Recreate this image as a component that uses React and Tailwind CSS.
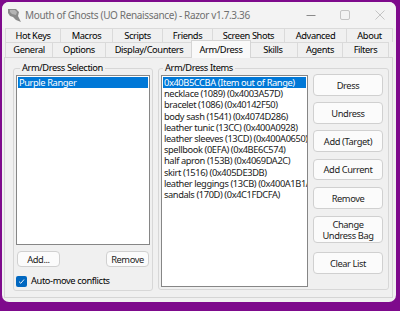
import React from "react";

const ROW1 = [
  ["Hot Keys", 56],
  ["Macros", 52],
  ["Scripts", 50],
  ["Friends", 50],
  ["Screen Shots", 72],
  ["Advanced", 62],
  ["About", 46],
];

const ROW2 = [
  ["General", 48],
  ["Options", 53],
  ["Display/Counters", 87],
  ["Arm/Dress", 60],
  ["Skills", 49],
  ["Agents", 45],
  ["Filters", 46],
];

const ITEMS = [
  "0x40B5CCBA (Item out of Range)",
  "necklace (1089) (0x4003A57D)",
  "bracelet (1086) (0x40142F50)",
  "body sash (1541) (0x4074D286)",
  "leather tunic (13CC) (0x400A0928)",
  "leather sleeves (13CD) (0x400A0650)",
  "spellbook (0EFA) (0x4BE6C574)",
  "half apron (153B) (0x4069DA2C)",
  "skirt (1516) (0x405DE3DB)",
  "leather leggings (13CB) (0x400A1B1A)",
  "sandals (170D) (0x4C1FDCFA)",
];

function Btn({ children, className = "" }) {
  return (
    <button
      type="button"
      className={`flex items-center justify-center whitespace-nowrap rounded-[4px] border border-[#d0d0d0] bg-[#fbfbfb] leading-[11px] text-[#1b1b1b] ${className}`}
    >
      {children}
    </button>
  );
}

function TabRow({ tabs, selected }) {
  return (
    <div className="ml-[3px] flex h-[15px]">
      {tabs.map(([label, w], i) => (
        <div
          key={label}
          style={{ width: w }}
          className={
            label === selected
              ? "relative z-10 -mx-[2px] -mt-[2px] flex h-[18px] items-center justify-center whitespace-nowrap border-x border-t border-[#d5d5d5] bg-[#f9f9f9] px-[2px]"
              : `flex h-[15px] items-center justify-center whitespace-nowrap border-t border-r border-[#dadada] bg-[#f0f0f0] ${i === 0 ? "border-l" : ""}`
          }
        >
          {label}
        </div>
      ))}
    </div>
  );
}

export default function App() {
  return (
    <div className="h-[311px] w-[400px] overflow-hidden bg-[#7e0a8c] pl-[2px] pt-[2px] font-['Noto_Sans',sans-serif] text-[9.3px] tracking-[-0.4px] text-black">
      <div className="flex h-[300px] w-[394px] flex-col overflow-hidden rounded-[7px] bg-[#f0f0f0]">
        {/* title bar */}
        <div className="flex h-[26px] items-center bg-[#f3f3f3] pl-[5px]">
          <svg width="15" height="15" viewBox="0 0 15 15">
            <path d="M1 1 H9 L12 4 L11 8 L14 14 L9 12 L6 9 L3 8 L1 5 Z" fill="#8a8a8a" />
            <path d="M3 2 H8 L10 4 L9 7 L5 6 L3 4 Z" fill="#b4b4b4" />
          </svg>
          <span className="ml-[3px] whitespace-nowrap text-[10px] tracking-[-0.35px] text-[#707070]">
            Mouth of Ghosts (UO Renaissance) - Razor v1.7.3.36
          </span>
          <div className="ml-auto flex items-center">
            <svg width="10" height="10" viewBox="0 0 10 10" className="mr-[24px]">
              <path d="M0.5 5.5 H9.5" stroke="#8a8a8a" strokeWidth="1" />
            </svg>
            <svg width="10" height="10" viewBox="0 0 10 10" className="mr-[25px]">
              <rect x="0.5" y="0.5" width="9" height="9" rx="1.5" fill="none" stroke="#c4c4c4" />
            </svg>
            <svg width="10" height="10" viewBox="0 0 10 10" className="mr-[11px]">
              <path d="M0.5 0.5 L9.5 9.5 M9.5 0.5 L0.5 9.5" stroke="#c4c4c4" strokeWidth="1" />
            </svg>
          </div>
        </div>

        {/* tabs */}
        <div className="ml-[3px] flex h-[14px]">
          {ROW1.map(([label, w], i) => (
            <div
              key={label}
              style={{ width: w }}
              className={`flex h-[14px] items-center justify-center whitespace-nowrap border-t border-r border-[#dadada] bg-[#f0f0f0] ${i === 0 ? "border-l" : ""}`}
            >
              {label}
            </div>
          ))}
        </div>
        <TabRow tabs={ROW2} selected="Arm/Dress" />

        {/* panel */}
        <div className="ml-[2px] flex h-[241px] w-[389px] gap-[5px] border border-[#d5d5d5] bg-[#f0f0f0] pl-[8px] pt-[3px]">
          <fieldset className="flex h-[230px] w-[140px] flex-col rounded-[3px] border border-[#d7d7d7] px-[2px]">
            <legend className="ml-[4px] px-[2px] leading-[14px]">Arm/Dress Selection</legend>
            <div className="h-[170px] border border-[#868686] bg-white p-[1px]">
              <div className="h-[11px] bg-[#0078d7] pl-[1px] leading-[11px] text-white">Purple Ranger</div>
            </div>
            <div className="mt-[6px] flex justify-between px-[1px]">
              <Btn className="h-[16px] w-[43px]">Add...</Btn>
              <Btn className="h-[16px] w-[43px]">Remove</Btn>
            </div>
            <label className="mt-[8px] flex items-center">
              <span className="flex h-[11px] w-[11px] items-center justify-center rounded-[2px] bg-[#0067c0]">
                <svg width="7" height="7" viewBox="0 0 7 7">
                  <path d="M1 3.6 L2.8 5.3 L6 1.5" fill="none" stroke="#fff" strokeWidth="0.9" />
                </svg>
              </span>
              <span className="ml-[4px] whitespace-nowrap leading-[12px]">Auto-move conflicts</span>
            </label>
          </fieldset>

          <fieldset className="flex h-[229px] w-[231px] rounded-[3px] border border-[#d7d7d7] pl-[2px]">
            <legend className="ml-[2px] px-[2px] leading-[14px]">Arm/Dress Items</legend>
            <div className="h-[212px] w-[147px] overflow-hidden border border-[#868686] bg-white p-[1px]">
              {ITEMS.map((item, i) => (
                <div
                  key={item}
                  className={`h-[11.2px] whitespace-nowrap pl-[1px] leading-[11px] ${i === 0 ? "bg-[#0078d7] text-white" : "text-[#1a1a1a]"}`}
                >
                  {item}
                </div>
              ))}
            </div>
            <div className="-mt-[1px] ml-[5px] flex w-[70px] flex-col">
              <Btn className="h-[22px] border-[#7fb0de]">Dress</Btn>
              <Btn className="mt-[6px] h-[22px]">Undress</Btn>
              <Btn className="mt-[6px] h-[22px]">Add (Target)</Btn>
              <Btn className="mt-[7px] h-[21px]">Add Current</Btn>
              <Btn className="mt-[7px] h-[22px]">Remove</Btn>
              <Btn className="mt-[7px] h-[27px] flex-col">
                <span>Change</span>
                <span>Undress Bag</span>
              </Btn>
              <Btn className="mt-[9px] h-[22px]">Clear List</Btn>
            </div>
          </fieldset>
        </div>
      </div>
    </div>
  );
}
